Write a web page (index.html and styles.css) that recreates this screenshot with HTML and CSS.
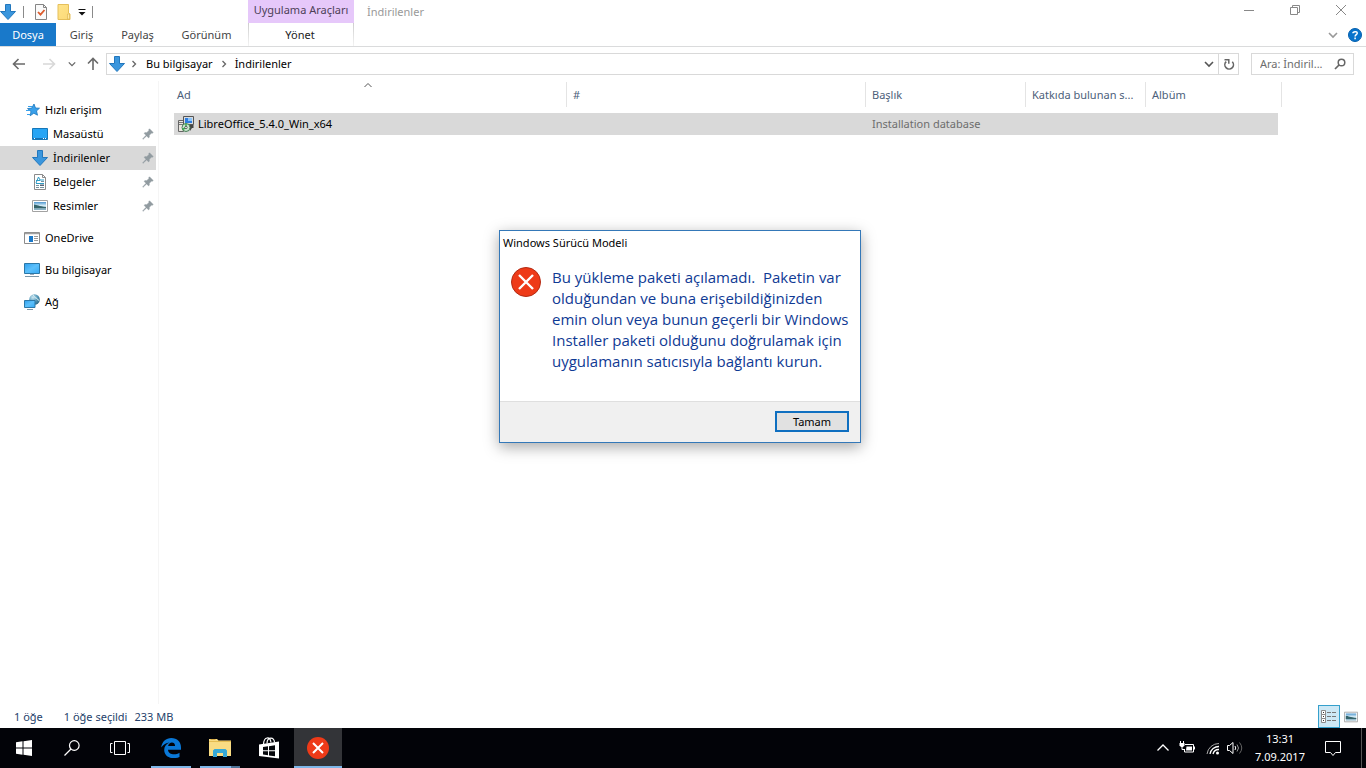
FILE: index.html
```html
<!DOCTYPE html>
<html lang="tr">
<head>
<meta charset="utf-8">
<title>İndirilenler</title>
<link rel="stylesheet" href="styles.css">
</head>
<body>
<svg class="defs" aria-hidden="true">
  <defs>
    <linearGradient id="g-screen" x1="0" y1="0" x2="1" y2="1"><stop offset="0" stop-color="#2f9fee"/><stop offset=".5" stop-color="#5cc0fb"/><stop offset="1" stop-color="#35a9f5"/></linearGradient>
    <linearGradient id="g-photo" x1="0" y1="0" x2="0" y2="1"><stop offset="0" stop-color="#4e96cf"/><stop offset=".45" stop-color="#d5ecf6"/><stop offset="1" stop-color="#7fa9bd"/></linearGradient>
    <radialGradient id="g-globe" cx=".35" cy=".3" r=".8"><stop offset="0" stop-color="#cfe9f3"/><stop offset=".5" stop-color="#5a9dbd"/><stop offset="1" stop-color="#24617f"/></radialGradient>
    <linearGradient id="g-note" x1="0" y1="0" x2="1" y2="1"><stop offset="0" stop-color="#ffe48a"/><stop offset="1" stop-color="#fbd976"/></linearGradient>
  </defs>
  <symbol id="down" viewBox="0 0 16 16"><path d="M5.500.5h5v7h5L8 15.500.5 7.500h5z" fill="#3a96dd" stroke="#2277bd"/></symbol>
  <symbol id="pin" viewBox="0 0 12 12"><path d="M7.500.8 11.200 4.500 10.300 5.200 9.600 5 7.300 7.300C7.600 8.500 7.300 9.300 6.700 9.900L4.600 7.900 1 11.300.6 10.900 4 7.300 2.100 5.300C2.700 4.600 3.600 4.400 4.700 4.700L7 2.400 6.800 1.600z" fill="#919ba0" stroke="#919ba0" stroke-width=".5"/></symbol>
  <symbol id="photo" viewBox="0 0 16 16"><path d="M.5 2.500h15v11H.5z" fill="#fff" stroke="#a2a2a2"/><path d="M2 4h12v8H2z" fill="url(#g-photo)"/><path d="M2 6.500c3 .3 5 1.800 12 2.500v1.200H2z" fill="#35646b"/></symbol>
  <symbol id="chev" viewBox="0 0 10 10"><path d="m1 3 4 4 4-4" fill="none" stroke="currentColor" stroke-width="1.600"/></symbol>
  <symbol id="sep" viewBox="0 0 6 10"><path d="m1.500 2 3 3-3 3" fill="none" stroke="#666" stroke-width="1.300"/></symbol>
</svg>

<main class="explorer">
  <header class="ribbon">
    <div class="titlebar">
      <div class="quick">
        <svg class="i16"><use href="#down"/></svg>
        <span class="bar"></span>
        <button class="bare q-props" aria-label="Özellikler"><svg class="i16" viewBox="0 0 16 16"><path d="M2.500.5h8l3 3v12h-11z" fill="#fafafa" stroke="#858585"/><path d="M10.500.5v3h3" fill="none" stroke="#858585"/><path d="m5 8 2.500 2.700L11.500 6" fill="none" stroke="#dc5b2c" stroke-width="1.800"/></svg></button>
        <button class="bare" aria-label="Yeni klasör"><svg class="i16" viewBox="0 0 16 16"><path d="M2 .5h10.500V9l1.500 1v5.500H2z" fill="url(#g-note)" stroke="#e5bf5b"/><path d="M11.500 15V10h2v5z" fill="#ffe9a3" stroke="#d9b24d" stroke-width=".6"/></svg></button>
        <button class="bare q-more" aria-label="Özelleştir"><svg class="i8" viewBox="0 0 8 8"><path d="M.5 1.500h7" stroke="#111"/><path d="M.5 4h7L4 7.500z" fill="#111"/></svg></button>
        <span class="bar"></span>
      </div>
      <div class="context">Uygulama Araçları</div>
      <h1 class="title">İndirilenler</h1>
      <div class="controls">
        <button class="bare" aria-label="Küçült"><svg class="i12" viewBox="0 0 12 12"><path d="M1 6.500h10" stroke="#888"/></svg></button>
        <button class="bare" aria-label="Geri yükle"><svg class="i12" viewBox="0 0 12 12"><path d="M1.500 3.500h7v7h-7zM3.500 3.500v-2h7v7h-2" fill="none" stroke="#888"/></svg></button>
        <button class="bare" aria-label="Kapat"><svg class="i12" viewBox="0 0 12 12"><path d="m1 1 10 10M11 1 1 11" stroke="#888"/></svg></button>
      </div>
    </div>
    <nav class="tabs">
      <button class="tab file">Dosya</button>
      <button class="tab home">Giriş</button>
      <button class="tab share">Paylaş</button>
      <button class="tab view">Görünüm</button>
      <button class="tab manage">Yönet</button>
      <div class="help">
        <button class="bare expand" aria-label="Şeridi genişlet"><svg class="i10"><use href="#chev"/></svg></button>
        <button class="bare" aria-label="Yardım"><svg class="i14" viewBox="0 0 14 14"><circle cx="7" cy="7" r="6.500" fill="#0873cc" stroke="#0560ae"/><path d="M4.900 5.300C5 3.200 9.200 3 9.200 5.200 9.200 6.700 7.100 6.700 7.100 8.500M7.100 9.600v1.600" fill="none" stroke="#fff" stroke-width="1.500"/></svg></button>
      </div>
    </nav>
  </header>

  <div class="navrow">
    <button class="bare n-back" aria-label="Geri"><svg class="i14" viewBox="0 0 14 14"><path d="M13 7H2M6.500 2 1.500 7l5 5" fill="none" stroke="#6a6a6a" stroke-width="1.600"/></svg></button>
    <button class="bare n-fwd" aria-label="İleri"><svg class="i14" viewBox="0 0 14 14"><path d="M1 7h11M7.500 2l5 5-5 5" fill="none" stroke="#d8d8d8" stroke-width="1.600"/></svg></button>
    <button class="bare n-recent" aria-label="Son konumlar"><svg class="i8"><use href="#chev"/></svg></button>
    <button class="bare n-up" aria-label="Yukarı"><svg class="i14" viewBox="0 0 14 14"><path d="M7 13V2M2 6.500l5-5 5 5" fill="none" stroke="#6a6a6a" stroke-width="1.600"/></svg></button>
    <div class="address">
      <svg class="i16"><use href="#down"/></svg>
      <svg class="sep"><use href="#sep"/></svg>
      <a href="#pc">Bu bilgisayar</a>
      <svg class="sep"><use href="#sep"/></svg>
      <a href="#downloads">İndirilenler</a>
      <button class="bare drop" aria-label="Önceki konumlar"><svg class="i10"><use href="#chev"/></svg></button>
      <button class="bare refresh" aria-label="Yenile"><svg class="i12" viewBox="0 0 12 12"><path d="M9.300 3.800A4.300 4.300 0 1 1 3.200 3.600" fill="none" stroke="#666" stroke-width="1.600"/><path d="M1.500 1.700h4.300v4" fill="none" stroke="#666" stroke-width="1.500"/></svg></button>
    </div>
    <div class="search">
      <input type="text" placeholder="Ara: İndiril..." aria-label="Ara">
      <svg class="i12" viewBox="0 0 12 12"><circle cx="7.500" cy="4.500" r="3.300" fill="none" stroke="#666" stroke-width="1.500"/><path d="M5 7 1 11" stroke="#666" stroke-width="1.700"/></svg>
    </div>
  </div>

  <div class="body">
    <nav class="side">
      <a class="item" href="#quick"><svg class="i16" viewBox="0 0 16 16"><path d="m10 2 1.500 4 4 .2-3 2.700 1 4.300-3.700-2-3.600 2.600.8-4.300L3.500 6.600l4.200-.5z" fill="#3aa0ea" stroke="#1b76bd" stroke-width=".8"/><path d="M4 4.500h4M2 8.500h4M3 12.500h3" stroke="#3aa0ea"/></svg><span>Hızlı erişim</span></a>
      <a class="item sub" href="#desktop"><svg class="i16" viewBox="0 0 16 16"><path d="M.5 2.500h15v11H.5z" fill="#27a5f5" stroke="#1677b8"/><path d="M1 12.500h14" stroke="#1672b5"/><path d="M2 12.500h1M11 12.500h1M13 12.500h1" stroke="#fff"/></svg><span>Masaüstü</span><svg class="i12"><use href="#pin"/></svg></a>
      <a class="item sub on" href="#downloads"><svg class="i16"><use href="#down"/></svg><span>İndirilenler</span><svg class="i12"><use href="#pin"/></svg></a>
      <a class="item sub" href="#documents"><svg class="i16" viewBox="0 0 16 16"><path d="M2.500.5h8l3 3v12h-11z" fill="#fff" stroke="#8b8b8b"/><path d="M10.500.5v3h3" fill="none" stroke="#8b8b8b"/><path d="M4 9 6.500 3 8 6h4M4 6.500h4M4 9.500h8" fill="none" stroke="#2e9bc5"/><path d="M4 11.500h3M4 13.500h3M8 13.500h4M9 7.500h3" stroke="#77929f"/><path d="M8 10.500h4v1.500H8z" fill="#567"/></svg><span>Belgeler</span><svg class="i12"><use href="#pin"/></svg></a>
      <a class="item sub" href="#pictures"><svg class="i16"><use href="#photo"/></svg><span>Resimler</span><svg class="i12"><use href="#pin"/></svg></a>
      <a class="item top" href="#onedrive"><svg class="i16" viewBox="0 0 16 16"><path d="M.5 2.500h15v11H.5z" fill="#fff" stroke="#8c8c8c"/><path d="M1 3.500h14" stroke="#a0a0a0" stroke-width="1.500"/><path d="M5 6h4v6H5z" fill="#1a78c8"/><path d="M10 6.500h4M10 8.500h4M10 10.500h4" stroke="#999"/></svg><span>OneDrive</span></a>
      <a class="item top" href="#pc"><svg class="i16" viewBox="0 0 16 16"><path d="M.5 1.500h15v10H.5z" fill="url(#g-screen)" stroke="#2b78a8"/><path d="M6 12.500h4" stroke="#9ab"/><path d="M1 14.500h14" stroke="#7d97a8"/></svg><span>Bu bilgisayar</span></a>
      <a class="item top" href="#network"><svg class="i16" viewBox="0 0 16 16"><circle cx="10.500" cy="5.500" r="5.300" fill="url(#g-globe)"/><path d="M9 1c2 1 1 3 3 3s1 3 3 2" fill="none" stroke="#d6edf2"/><path d="M.5 6.500h10.500v7H.5z" fill="url(#g-screen)" stroke="#2b78a8"/><path d="M3 15.500h6" stroke="#7d97a8"/></svg><span>Ağ</span></a>
    </nav>
    <section class="files">
      <table>
        <thead><tr>
          <th class="c-name">Ad<svg class="sort i8" viewBox="0 0 8 8"><path d="m.5 5 3.500-3.500L7.500 5" fill="none" stroke="#555"/></svg></th>
          <th>#</th><th class="c-title">Başlık</th><th class="c-people">Katkıda bulunan s...</th><th class="c-album">Albüm</th>
        </tr></thead>
        <tbody><tr>
          <td class="c-name"><div class="file-name"><svg class="i16" viewBox="0 0 16 16"><path d="M.5 4.500h5v11h-5z" fill="#e9e6df" stroke="#666"/><path d="M1 6.500h4M1 8.500h4" stroke="#777"/><path d="M5.500.5h10v8h-10z" fill="#d6dbe0" stroke="#555"/><path d="M7 2h7v5H7z" fill="#2f7ee0"/><path d="M10 2h4v3h-4z" fill="#8ac5fa"/><path d="M11 9h4.500v3H14l-2 3z" fill="#444"/><circle cx="8" cy="11.500" r="4" fill="#cbe8cf" stroke="#477d55"/><path d="M8 7.500v4l-3.500 2" fill="none" stroke="#39a84d" stroke-width="1.500"/><circle cx="8" cy="11.500" r="1.200" fill="#fff" stroke="#333" stroke-width=".7"/></svg><span>LibreOffice_5.4.0_Win_x64</span></div></td>
          <td></td><td>Installation database</td><td></td><td class="c-album"></td>
        </tr></tbody>
      </table>
    </section>
  </div>

  <footer class="status">
    <span>1 öğe</span>
    <span class="picked">1 öğe seçildi</span>
    <span>233 MB</span>
    <div class="views">
      <button class="bare view-on" aria-label="Ayrıntılar"><svg class="i16" viewBox="0 0 16 16"><path d="M.5 1.500h4v4h-4zM.5 5.500h4v4h-4zM.5 9.500h4v4h-4z" fill="#fff" stroke="#8b8b8b"/><path d="M2 3.500h1M2 7.500h1M2 11.500h1" stroke="#333"/><path d="M6 3.500h4M11 3.500h4M6 7.500h4M11 7.500h4M6 11.500h4M11 11.500h4" stroke="#777"/></svg></button>
      <button class="bare view-off" aria-label="Büyük simgeler"><svg class="i14"><use href="#photo"/></svg></button>
    </div>
  </footer>
</main>

<section class="dialog" role="dialog" aria-labelledby="dlg-title">
  <h2 id="dlg-title">Windows Sürücü Modeli</h2>
  <div class="message">
    <svg class="i30" viewBox="0 0 30 30"><circle cx="15" cy="15" r="14.500" fill="#ee3a18" stroke="#b22b14"/><path d="m8 8 14 14M22 8 8 22" stroke="#fff" stroke-width="2.400"/></svg>
    <p>Bu yükleme paketi açılamadı.&nbsp; Paketin var<br>olduğundan ve buna erişebildiğinizden<br>emin olun veya bunun geçerli bir Windows<br>Installer paketi olduğunu doğrulamak için<br>uygulamanın satıcısıyla bağlantı kurun.</p>
  </div>
  <div class="actions"><button class="ok">Tamam</button></div>
</section>

<footer class="taskbar">
  <button class="task" aria-label="Başlat"><svg class="i16" viewBox="0 0 16 16"><path d="M0 2.200 6.500 1.300v6.200H0zM7.500 1.200 16 0v7.500H7.500zM0 8.500h6.500v6.200L0 13.800zM7.500 8.500H16V16l-8.500-1.200z" fill="#fff"/></svg></button>
  <button class="task" aria-label="Ara"><svg class="i16" viewBox="0 0 16 16"><circle cx="10.300" cy="5.500" r="4.800" fill="none" stroke="#fff" stroke-width="1.200"/><path d="M7 9 .5 15.500" stroke="#fff" stroke-width="1.300"/></svg></button>
  <button class="task" aria-label="Görev görünümü"><svg class="i20" viewBox="0 0 20 20"><path d="M4.500 3.500h11v13h-11zM2.500 5.500h-2v9h2M17.500 5.500h2v9h-2" fill="none" stroke="#fff"/></svg></button>
  <div class="apps">
    <button class="task open" aria-label="Microsoft Edge"><svg class="i20" viewBox="0 0 20 20"><path d="M.2 9.500C1 3.500 5 0 10.300 0 16.300 0 20 4 20 9.500v2.300H7c.2 5 7.500 5.600 11.500 3v4.100C11.500 22 3.200 19.200 3.200 12c0-3.500 2-6 5.300-7.500C5 5 2.500 6.200.2 9.500zM7.100 8h7C14 3 7.800 3.500 7.100 8z" fill="#0a78d7"/></svg></button>
    <button class="task open many" aria-label="Dosya Gezgini"><svg class="i22" viewBox="0 0 22 22"><path d="M0 2h8l1.500 1.500H22V19H0z" fill="#f9dc83"/><path d="M0 4.500h22" stroke="#e5bd52"/><path d="M1.500 2.500h5" stroke="#d9ac45"/><path d="M4 20v-6.500L5.500 12h11l1.500 1.500V20h-4v-4H8v4z" fill="#36a9d6"/></svg></button>
    <button class="task" aria-label="Mağaza"><svg class="i22" viewBox="0 0 22 22"><path d="M1 7.500 21 4.500v17L1 19z" fill="#fff"/><path d="M5.500 7C6-.5 12-1 13 5.500M9 6.500c0-7 7.500-7 7.500-1" fill="none" stroke="#fff" stroke-width="1.200"/><path d="m5 10 5-.7v4H5zM11 9.200l6-1v5h-6zM5 14.200h5v4l-5-.6zM11 14.200h6v5l-6-.8z" fill="#05070b"/></svg></button>
    <button class="task active" aria-label="Windows Sürücü Modeli"><svg class="i22" viewBox="0 0 22 22"><circle cx="11" cy="11" r="11" fill="#ee3a18"/><path d="m6 6 10 10M16 6 6 16" stroke="#fff" stroke-width="2"/></svg></button>
  </div>
  <div class="tray">
    <svg class="i12" viewBox="0 0 12 12"><path d="m.5 8.500 5.500-5.500 5.500 5.500" fill="none" stroke="#fff" stroke-width="1.300"/></svg>
    <svg class="i16" viewBox="0 0 16 16"><path d="M6 4.500h8.500v7.500h-9V9M15.500 6.500v3" fill="none" stroke="#fff"/><path d="M7.500 6.500h5.500v4H7z" fill="#fff"/><path d="M1.500 1v2M4.500 1v2" stroke="#fff"/><path d="M.5 3h5v2.500L4 7H2L.5 5.500z" fill="#fff"/><path d="M3 7v2.500h3" fill="none" stroke="#fff"/></svg>
    <svg class="i14 wifi" viewBox="0 0 14 14"><path d="M1 13A12 12 0 0 1 13 2.500" fill="none" stroke="#aaa"/><path d="M4 13a9 9 0 0 1 9-7.500M7 13a6 6 0 0 1 6-4.500" fill="none" stroke="#fff" stroke-width="1.300"/><circle cx="11.500" cy="12" r="1.500" fill="#fff"/></svg>
    <svg class="i16" viewBox="0 0 16 16"><path d="M.5 5.500h2L6 2.500v11l-3.500-3h-2z" fill="none" stroke="#fff"/><path d="M8 6q1.500 2 0 4" fill="none" stroke="#fff"/><path d="M10 4.500q3 3.500 0 7" fill="none" stroke="#999"/><path d="M12.500 2.500q4.500 5.500 0 11" fill="none" stroke="#666"/></svg>
    <time class="clock">13:31<br>7.09.2017</time>
    <svg class="i16" viewBox="0 0 16 16"><path d="M.5 1.500h15v11h-5L8 15.500l-2.500-3h-5z" fill="none" stroke="#fff"/></svg>
    <button class="bare peek" aria-label="Masaüstünü göster"></button>
  </div>
</footer>
</body>
</html>
```

FILE: styles.css
```css
* { box-sizing: border-box; }
body {
  margin: 0;
  height: 100vh;
  display: flex;
  flex-direction: column;
  position: relative;
  overflow: hidden;
  background: #fff;
  color: #000;
  font: 11px/16px "Noto Sans", "Open Sans", sans-serif;
}
button, input { font: inherit; color: inherit; }
a { color: inherit; text-decoration: none; }
svg { display: block; flex: none; }
h1, h2, p { margin: 0; font-weight: 400; font-size: inherit; }
.defs { position: absolute; width: 0; height: 0; }
.bare { display: flex; align-items: center; justify-content: center; padding: 0; border: 0; background: none; }
.i8 { width: 8px; height: 8px; }
.i10 { width: 10px; height: 10px; }
.i12 { width: 12px; height: 12px; }
.i14 { width: 14px; height: 14px; }
.i16 { width: 16px; height: 16px; }
.i20 { width: 20px; height: 20px; }
.i22 { width: 22px; height: 22px; }
.i30 { width: 30px; height: 30px; }

.explorer { flex: 1; min-height: 0; display: flex; flex-direction: column; }

.ribbon { border-bottom: 1px solid #dadbdc; }
.titlebar { display: flex; height: 23px; }
.quick { width: 248px; display: flex; align-items: center; gap: 7px; }
.quick .bar { width: 1px; height: 12px; background: #8a8a8a; }
.q-props { margin-left: 2px; }
.q-more { margin: 0 -1px; }
.context { width: 106px; padding-top: 2px; background: #e6c8fa; color: #4d3f57; text-align: center; }
.title { padding: 4px 0 0 13px; color: #999; }
.controls { margin-left: auto; display: flex; align-items: flex-start; gap: 34px; padding: 4px 19px 0 0; }
.tabs { display: flex; height: 23px; }
.tab { padding: 0; border: 0; background: none; color: #444; }
.tab.file { width: 56px; background: #1979ca; color: #fff; }
.home { width: 51px; }
.share { width: 61px; }
.view { width: 77px; }
.tab.manage { width: 106px; margin-left: 3px; padding-right: 2px; color: #222; border: 1px solid; border-width: 0 1px; border-image: linear-gradient(#ccc, #f5f5f5) 1; }
.help { margin-left: auto; display: flex; align-items: center; gap: 10px; padding-right: 4px; }
.expand { color: #999; }

.navrow { height: 34px; display: flex; align-items: center; padding: 0 12px; color: #666; }
.n-fwd { margin-left: 16px; }
.n-recent { margin-left: 12px; }
.n-up { margin: 0 6px 0 10px; }
.address { flex: 1; height: 22px; display: flex; align-items: center; border: 1px solid #d9d9d9; padding-left: 2px; color: #000; }
.sep { width: 6px; height: 10px; margin: 0 9px 0 6px; }
.address a + .sep { margin: 0 8px; }
.drop { margin-left: auto; width: 18px; align-self: stretch; color: #555; }
.refresh { width: 20px; align-self: stretch; border-left: 1px solid #d9d9d9; }
.search { width: 103px; height: 22px; margin-left: 12px; display: flex; align-items: center; gap: 4px; padding: 0 7px 0 8px; border: 1px solid #d9d9d9; }
.search input { flex: 1; min-width: 0; padding: 0; border: 0; outline: 0; background: none; }
.search input::placeholder { color: #6d6d6d; opacity: 1; }

.body { flex: 1; min-height: 0; display: flex; }
.side { width: 159px; padding: 17px 2px 0 0; border-right: 1px solid #f5f5f5; }
.item { height: 24px; display: flex; align-items: center; gap: 5px; padding: 0 2px 0 24px; }
.item span { flex: 1; }
.sub { padding-left: 32px; }
.top { margin-top: 8px; }
.on { background: #d9d9d9; }

.files { flex: 1; padding: 1px 84px 0 15px; }
table { width: 100%; table-layout: fixed; border-collapse: separate; border-spacing: 0; }
th { height: 25px; padding: 0 0 0 6px; border-right: 1px solid #e4e4e4; color: #4c607a; font-weight: 400; text-align: left; position: relative; white-space: nowrap; }
.sort { position: absolute; left: 190px; top: 0; }
tbody::before { content: ""; display: block; height: 6px; }
td { height: 22px; padding: 0 0 0 6px; background: #d9d9d9; color: #6d6d6d; }
.c-name { width: 393px; padding-left: 3px; }
td.c-name { padding-left: 4px; color: #000; }
.c-title { width: 160px; }
.c-people { width: 120px; }
.c-album { width: 136px; }
td.c-album { border-right: 4px solid #fff; }
.file-name { display: flex; align-items: center; gap: 4px; }

.status { height: 24px; display: flex; align-items: center; padding: 1px 8px 0 14px; color: #26426b; }
.picked { margin: 0 7px 0 21px; }
.views { margin-left: auto; display: flex; align-self: stretch; align-items: center; gap: 4px; }
.view-on { width: 22px; height: 23px; border: 1px solid #35a0cc; background: #cde8f5; }

.dialog { position: absolute; left: 499px; top: 230px; width: 362px; border: 1px solid #3478b8; background: #fff; box-shadow: 0 4px 14px rgba(0, 0, 0, .35); }
.dialog h2 { padding: 4px 3px 0; }
.message { display: flex; gap: 11px; padding: 16px 0 29px 11px; }
.message p { color: #0f3a94; font-family: "Open Sans", "Noto Sans", sans-serif; font-size: 15px; line-height: 21px; white-space: nowrap; }
.actions { height: 41px; display: flex; justify-content: flex-end; align-items: flex-start; padding: 9px 11px 0; border-top: 1px solid #dfdfdf; background: #f0f0f0; }
.ok { width: 74px; height: 21px; padding: 0; border: 2px solid #0f6fc0; background: #e1e1e1; line-height: 16px; }

.taskbar { height: 40px; display: flex; background: #020308; color: #fff; }
.task { width: 48px; padding: 0; border: 0; background: none; display: flex; align-items: center; justify-content: center; }
.apps { display: flex; gap: 1px; margin-left: 3px; }
.open { background: linear-gradient(#7eb6e8, #7eb6e8) center bottom / 40px 2px no-repeat; }
.many { background: linear-gradient(to right, #7eb6e8 31px, #4e7397 31px) center bottom / 40px 2px no-repeat; }
.active { background: #333438; box-shadow: inset 0 -2px #7eb6e8; }
.tray { margin-left: auto; display: flex; align-items: center; gap: 9px; }
.tray > svg:first-child { margin-right: 1px; }
.wifi { margin: 0 -2px 0 2px; }
.clock { width: 62px; margin: 0 5px 0 -3px; text-align: center; line-height: 18px; }
.peek { width: 5px; height: 40px; margin-left: 11px; border-left: 1px solid #555; }
```
